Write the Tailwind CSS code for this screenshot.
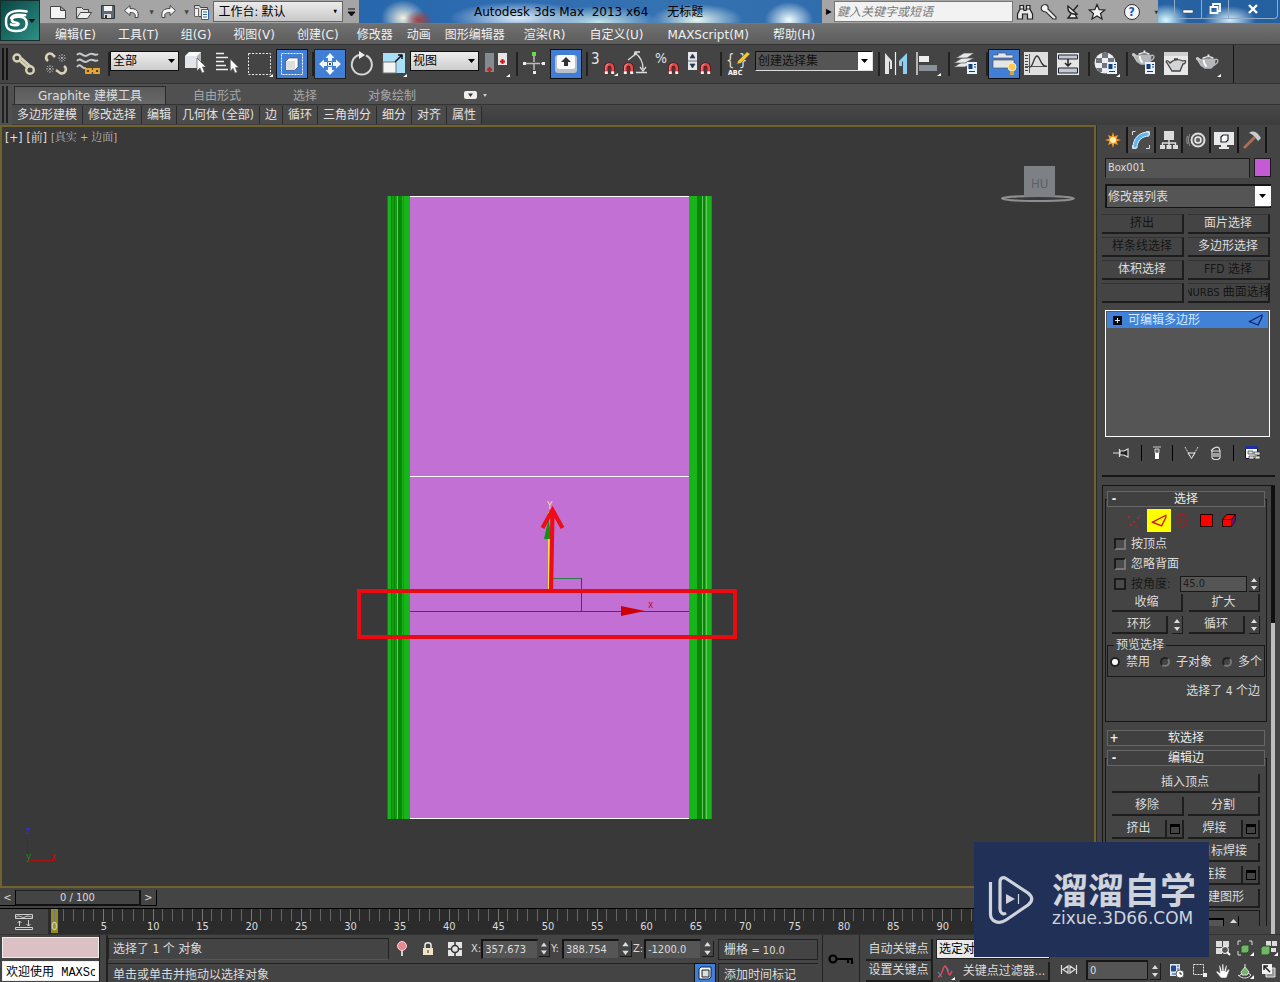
<!DOCTYPE html>
<html lang="zh-CN">
<head>
<meta charset="utf-8">
<title>Autodesk 3ds Max 2013 x64 - 无标题</title>
<script src="https://cdn.jsdelivr.net/npm/@tailwindcss/browser@4"></script>
</head>
<body class="bg-[#444] text-[#dcdcdc] text-[12px] leading-4 font-['DejaVu_Sans_Condensed','Noto_Sans','Noto_Sans_CJK_SC',sans-serif]">
<svg class="hidden" aria-hidden="true">
  <defs>
    <symbol id="magnet" viewBox="0 0 12 13"><path d="M2.500 13V6a3.500 3.500 0 0 1 7 0v7" fill="none" stroke="#5c0d10" stroke-width="4.600"/><path d="M2.500 10V6a3.500 3.500 0 0 1 7 0v4" fill="none" stroke="#e2474b" stroke-width="3"/><path d="M1.800 9V6a4 4 0 0 1 3-4" fill="none" stroke="#f59a9a"/><path d="M.8 10h3.400v3H.8zM7.800 10h3.400v3H7.800z" fill="#f2f2f2"/></symbol>
    <symbol id="cursor" viewBox="0 0 10 16"><path d="M1 0v13l3-3 2 5 2.500-1-2-5H10z" fill="#fff" stroke="#555" stroke-width=".7"/></symbol>
    <symbol id="panel" viewBox="0 0 10 12"><path d="M0 0h10v12H0z" fill="#e8f0fa"/><path d="M1.500 2h4v5h-4z" fill="#123f80"/><path d="M7 2.500h2M7 5h2M2 9.500h6" stroke="#123f80"/></symbol>
    <symbol id="teapot" viewBox="0 0 24 16"><path d="M6 8C3 3 0 3 1 5c3 1 2 6 7 8" fill="none" stroke="#c6c8ca" stroke-width="1.800"/><path d="M19 6c3-2 5 0 3 3l-4 3" fill="none" stroke="#b5b8bb" stroke-width="1.500"/><path d="M5 5c4-2 12-2 15 0 1 5-2 8-4 10H9C6 13 4 9 5 5z" fill="#b4b8bb"/><path d="M7 4c4-2 8-2 11 0M12 1h2" stroke="#f0f0f0" stroke-width="1.500"/><path d="M8 6c0 3 1 5 3 7" stroke="#f7f7f7" stroke-width="2" fill="none"/></symbol>
    <symbol id="spin" viewBox="0 0 10 14"><path d="M5 1l3 4H2zM5 13L2 9h6z" fill="#ddd"/></symbol>
    <symbol id="edge" viewBox="0 0 16 12"><path d="M1.500 7.500L14 1v2l-4 8z M1 7.500l9 3.500" fill="none" stroke="currentColor" stroke-width="1.200"/></symbol>
  </defs>
</svg>
<div class="min-h-screen flex flex-col relative">

  <!-- Application button, title bar and menus -->
  <header class="flex h-11 bg-linear-to-b from-[#8a8a8a] to-[#5c5c5c]">
    <button aria-label="应用程序菜单" class="w-10 h-[41px] border border-[#132d2c] bg-linear-to-br from-[#0c4544] to-[#2c9186] flex items-center shrink-0">
      <svg class="w-full h-10" viewBox="0 0 40 40"><path d="M27 10C16 8 7 10 5.500 17c-1 9 1 13 9 13.500 8 .5 12-1 12.500-7 .3-6-3-8-9-8-4 0-7 1-6.500 4 .5 3 7 1.500 7 3.500s-5 2-8 .5M10.500 17c2-4 9-4 15-3" fill="none" stroke="#fff" stroke-width="2.600" stroke-linecap="round"/><path d="M29 18h7l-3.500 4z" fill="#111"/></svg>
    </button>
    <div class="flex-1 min-w-0">
      <div class="h-6 flex bg-linear-to-r from-[#155ba8] via-[#3572b2] to-[#245f9f] border-b border-[#6c7884]">
        <div class="w-[319px] shrink-0 bg-[#a5a5a5] flex items-center pl-2">
          <button aria-label="新建" class="w-[26px]"><svg width="20" height="18" viewBox="0 0 20 18"><path d="M2.500 3.500h10l5 4v8h-15zM12.500 3.500v4h5" fill="#f4f4f4" stroke="#444"/></svg></button>
          <button aria-label="打开" class="w-[25px]"><svg width="20" height="18" viewBox="0 0 20 18"><path d="M2.500 15.500v-11h5l2 2h5v3" fill="#ddd" stroke="#444"/><path d="M2.500 15.500l4-6h11l-4 6z" fill="#eee" stroke="#444"/></svg></button>
          <button aria-label="保存" class="w-6"><svg width="18" height="18" viewBox="0 0 18 18"><path d="M2.500 2.500h13v13h-13z" fill="#5e6a78" stroke="#333"/><path d="M5 3h8v5H5z" fill="#f3f3f3"/><path d="M5 11h7v4H5z" fill="#ddd"/><path d="M6 12h2v3H6z" fill="#333"/></svg></button>
          <button aria-label="撤消" class="w-[22px]"><svg width="18" height="18" viewBox="0 0 18 18"><path d="M1.500 7.500L7 2.500v3c6 0 9 2 8 9h-3c1-4-1-5-5-5v3z" fill="#f5f5f5" stroke="#444"/></svg></button>
          <span class="w-[14px] text-[6px] text-[#444] text-center">▼</span>
          <button aria-label="重做" class="w-[22px]"><svg width="18" height="18" viewBox="0 0 18 18"><path d="M16.500 7.500L11 2.500v3c-6 0-9 2-8 9h3c-1-4 1-5 5-5v3z" fill="#f5f5f5" stroke="#444"/></svg></button>
          <span class="w-[12px] text-[6px] text-[#444] text-center">▼</span>
          <button aria-label="项目文件夹" class="w-[21px]"><svg width="18" height="18" viewBox="0 0 18 18"><path d="M1.500 5.500v-3h5l1 2h7v9h-9" fill="#ddd" stroke="#444"/><path d="M1.500 5.500h4v8h-4z" fill="#f2f2f2" stroke="#666"/><path d="M8.500 6.500h7v10h-7z" fill="#fff" stroke="#2b5ea5"/><path d="M10 9h4M10 11.500h4M10 14h4" stroke="#2b5ea5"/></svg></button>
          <div class="relative h-[21px] w-[130px]">
            <select aria-label="工作台" class="appearance-none w-full h-full bg-linear-to-b from-[#ececec] to-[#c8c8c8] border border-[#666] text-black text-[12px] leading-4 pl-1"><option>工作台: 默认</option></select>
            <span class="absolute right-1.5 top-0.5 text-[5px] text-black pointer-events-none">▼</span>
          </div>
          <button aria-label="自定义快速访问工具栏" class="w-4"><svg width="16" height="16" viewBox="0 0 16 16"><path d="M5 5h7M5 8h7l-3.500 4z" fill="#111" stroke="#111"/></svg></button>
        </div>
        <div class="flex-1 min-w-0 overflow-hidden bg-[radial-gradient(ellipse_14px_10px_at_60px_20px,#a33f3f,transparent),radial-gradient(ellipse_22px_18px_at_44px_18px,#f3f1df,transparent),radial-gradient(ellipse_70px_16px_at_160px_18px,#ddebf7,transparent),radial-gradient(ellipse_60px_16px_at_240px_22px,#c6e5ea,transparent),radial-gradient(ellipse_46px_16px_at_338px_20px,#e6f6ed,transparent),radial-gradient(ellipse_24px_18px_at_430px_20px,#f3ffff,transparent)] font-['DejaVu_Sans','Noto_Sans_CJK_SC',sans-serif] text-black flex items-center pl-[115px] gap-[19px]">
          <h1>Autodesk 3ds Max&nbsp; 2013 x64</h1><span>无标题</span>
        </div>
        <div class="w-[336px] shrink-0 bg-[#a5a5a5] flex items-center">
          <span class="w-3 pl-1 text-[8px] text-black">▶</span>
          <input aria-label="搜索" placeholder="鍵入关键字或短语" class="w-[180px] h-[21px] bg-[#f2f2f2] border border-[#777] px-0.5 italic text-[12px] leading-5 placeholder:text-[#777]">
          <button aria-label="搜索帮助" class="w-6 flex justify-center"><svg width="18" height="18" viewBox="0 0 18 18"><path d="M4 2.500h3.500V6L8 7.500h2l.5-1.500V2.500H14V6l2.500 5v5h-5v-5h-5v5h-5v-5L4 6z" fill="#e9e9e9" stroke="#222" stroke-width="1.200"/><path d="M4 6h3.500m3 0H14" stroke="#222"/></svg></button>
          <button aria-label="速博" class="w-6 flex justify-center"><svg width="18" height="18" viewBox="0 0 18 18"><path d="M2 3c3-3 7-1 6 3l8 8v2h-3l-7-7C2 9 0 6 2 3z" fill="#f3f3f3" stroke="#333" stroke-width="1.200"/></svg></button>
          <button aria-label="通讯中心" class="w-6 flex justify-center"><svg width="18" height="18" viewBox="0 0 18 18"><path d="M4 3c-1 6 4 9 9 8zM9 8l5-6M7 11l-3 4h9l-2-4" fill="#eee" stroke="#222" stroke-width="1.400"/></svg></button>
          <button aria-label="收藏夹" class="w-6 flex justify-center"><svg width="18" height="18" viewBox="0 0 18 18"><path d="M9 1.500l2.200 5.200 5.600.3-4.300 3.500 1.500 5.500L9 13l-5 3 1.500-5.500L1.200 7l5.600-.3z" fill="#f4f4f4" stroke="#222" stroke-width="1.200"/></svg></button>
          <button aria-label="帮助" class="w-[46px] flex justify-center"><span class="w-4 h-4 rounded-full border border-[#333] bg-[#f5f5f5] text-[#1c52b0] font-bold text-[12px] leading-[14px]">?</span></button>
          <span class="text-[5px] text-[#333]">▼</span>
        </div>
        <div class="w-[122px] shrink-0 pl-4 pr-0.5 bg-[radial-gradient(ellipse_22px_16px_at_8px_20px,#d8faff,transparent),radial-gradient(ellipse_26px_14px_at_72px_20px,#d4ecf5,transparent)]">
          <div class="h-[19px] border border-t-0 border-[#8eabca] rounded-b flex">
            <button aria-label="最小化" class="flex-1 border-r border-[#8eabca] flex items-center justify-center"><svg width="12" height="12" viewBox="0 0 12 12"><path d="M1 7h10v3H1z" fill="#fff" stroke="#345" stroke-width=".5"/></svg></button>
            <button aria-label="还原" class="flex-1 border-r border-[#8eabca] flex items-center justify-center"><svg width="12" height="12" viewBox="0 0 12 12"><path d="M4 3V1h7v7H9M1.500 4h7v6h-7z" fill="none" stroke="#fff" stroke-width="1.800"/></svg></button>
            <button aria-label="关闭" class="w-12 flex items-center justify-center"><svg width="12" height="12" viewBox="0 0 12 12"><path d="M2 2l8 8M10 2l-8 8" stroke="#fff" stroke-width="2.400"/></svg></button>
          </div>
        </div>
      </div>
      <nav class="h-5 flex items-center pt-0.5 pl-1 text-[#f0f0f0] whitespace-nowrap font-['DejaVu_Sans','Noto_Sans_CJK_SC',sans-serif]">
        <button class="px-[11px]">编辑(E)</button><button class="px-[11px]">工具(T)</button><button class="px-[11px]">组(G)</button><button class="px-[11px]">视图(V)</button><button class="px-[11px]">创建(C)</button><button class="px-[7px]">修改器</button><button class="px-[7px]">动画</button><button class="px-[7px]">图形编辑器</button><button class="px-3">渲染(R)</button><button class="px-3">自定义(U)</button><button class="px-3">MAXScript(M)</button><button class="px-3">帮助(H)</button>
      </nav>
    </div>
  </header>

  <!-- Main toolbar -->
  <div role="toolbar" aria-label="主工具栏" class="h-10 flex items-center border-y border-[#333] bg-[#444]">
    <div class="w-2 h-8 flex gap-0.5 pl-0.5"><i class="w-0.5 bg-black/70"></i><i class="w-0.5 bg-black/70"></i></div>
    <div class="flex items-center h-full border-r border-[#161616] w-[1226px]">
      <button aria-label="选择并链接" class="w-8 flex justify-center"><svg width="28" height="28" viewBox="0 0 28 28"><g fill="none" stroke="#d8d3b7" stroke-width="2.400"><circle cx="7" cy="8" r="3.500"/><circle cx="20" cy="20" r="3.800"/><path d="M9 10l9 8M11 8l9 8"/></g></svg></button>
      <button aria-label="断开当前选择链接" class="w-8 flex justify-center"><svg width="28" height="28" viewBox="0 0 28 28"><path d="M6 11c-4-3-1-9 4-7l3 3M22 16c4 3 1 9-4 7l-4-3" fill="none" stroke="#d8d3b7" stroke-width="2.500"/><path d="M17 5l6 6m0-6l-6 6m3-7v8m-4-4h8M5 16l6 6m0-6l-6 6m3-7v8m-4-4h8" stroke="#aaa" stroke-dasharray="2 1"/></svg></button>
      <button aria-label="绑定到空间扭曲" class="w-8 flex justify-center"><svg width="28" height="28" viewBox="0 0 28 28"><path d="M3 5c4-5 6 4 11 0s6 2 10-1M3 11c4-5 6 4 11 0s6 2 10-1M3 17c4-5 5 3 9 1" fill="none" stroke="#c5c9cc" stroke-width="2"/><path d="M12 19h5v4h-5zm8 0h5v4h-5zM15 21h7" fill="none" stroke="#eba529" stroke-width="1.800"/></svg></button>
      <i class="w-1.5 h-6 border-r-2 border-[#222]"></i>
      <div class="relative w-[70px] h-5 self-start mt-1.5"><select aria-label="选择过滤器" class="appearance-none w-[69px] h-5 border border-[#111] bg-linear-to-b from-[#eee] to-[#ccc] text-black text-[12px] leading-4 pl-0.5"><option>全部</option></select><svg class="absolute right-1 top-2 pointer-events-none" width="8" height="5"><path d="M0 0h7L3.500 4z"/></svg></div>
      <button aria-label="选择对象" class="w-8 flex justify-center"><svg width="28" height="28" viewBox="0 0 28 28"><path d="M3 6l4-4h12v12l-4 4H3z" fill="#fafafa"/><path d="M3 6h12v12H3z" fill="#e2e5e9"/><path d="M15 6l4-4v12l-4 4z" fill="#b3b7bd"/><use href="#cursor" x="14" y="8" width="10" height="16"/></svg></button>
      <button aria-label="按名称选择" class="w-8 flex justify-center"><svg width="28" height="28" viewBox="0 0 28 28"><path d="M2 3.500h8M2 7.500h12M2 11.500h8M2 15.500h10M2 19.500h12" stroke="#eee" stroke-width="1.600"/><use href="#cursor" x="15" y="9" width="10" height="15"/></svg></button>
      <button aria-label="矩形选择区域" class="w-8 flex justify-center"><svg width="28" height="28" viewBox="0 0 28 28"><path d="M2.500 3.500h22v21h-22z" fill="none" stroke="#eee" stroke-dasharray="2 1.500"/><path d="M27 24v3h-4z" fill="#fff"/></svg></button>
      <button aria-label="窗口/交叉" class="w-8 h-[30px] bg-[#417fd6] border border-[#111] flex justify-center items-center"><svg width="28" height="28" viewBox="0 0 28 28"><path d="M3.500 3.500h21v21h-21z" fill="none" stroke="#fff" stroke-dasharray="2 1"/><path d="M8 11l3-3h9v9l-3 3H8z" fill="#fff" stroke="#555" stroke-width=".7"/><path d="M8 11h9v9H8z" fill="#dedede"/></svg></button>
      <i class="w-1.5 h-6 border-r-2 border-[#222]"></i>
      <button aria-label="选择并移动" class="w-8 h-[30px] bg-[#417fd6] border border-[#222] flex justify-center items-center"><svg width="28" height="28" viewBox="0 0 28 28"><path d="M14 3l4.500 5H16v3h-4V8H9.500zM14 25l4.500-5H16v-3h-4v3H9.500zM3 14l5-4.500V12h3v4H8v2.500zM25 14l-5-4.500V12h-3v4h3v2.500z" fill="#f0f4fb"/><path d="M12.500 12.500h3v3h-3z" fill="#1d427d" stroke="#fff"/></svg></button>
      <button aria-label="选择并旋转" class="w-8 flex justify-center"><svg width="28" height="28" viewBox="0 0 28 28"><path d="M11 5a10 10 0 1 0 7 .5" fill="none" stroke="#d5d5d5" stroke-width="2"/><path d="M11 1l6 4-6 4z" fill="#eee"/></svg></button>
      <button aria-label="选择并缩放" class="w-8 flex justify-center"><svg width="28" height="28" viewBox="0 0 28 28"><path d="M3 3h22v20H3z" fill="#a9def8"/><path d="M3 12h13v11H3z" fill="#f4f4f4" stroke="#777"/><path d="M15 12l7-7M18 5h4v4" stroke="#111" stroke-width="1.500" fill="none"/><path d="M27 24v3h-4z" fill="#fff"/></svg></button>
      <div class="relative w-[70px] h-5 self-start mt-1.5"><select aria-label="参考坐标系" class="appearance-none w-[69px] h-5 border border-[#111] bg-linear-to-b from-[#eee] to-[#ccc] text-black text-[12px] leading-4 pl-0.5"><option>视图</option></select><svg class="absolute right-1 top-2 pointer-events-none" width="8" height="5"><path d="M0 0h7L3.500 4z"/></svg></div>
      <button aria-label="使用轴点中心" class="w-8 flex justify-center"><svg width="28" height="28" viewBox="0 0 28 28"><path d="M3 3h9v19H3z" fill="#858a91"/><path d="M16 3h9v12h-9z" fill="#e6e6e6"/><path d="M7.500 17v5m-2.500-2.500h5M20.500 9v5M18 11.500h5" stroke="#d21717" stroke-width="2"/><path d="M28 24v3h-4z" fill="#fff"/></svg></button>
      <i class="w-1.5 h-6 border-r-2 border-[#222]"></i>
      <button aria-label="选择并操纵" class="w-8 flex justify-center"><svg width="28" height="28" viewBox="0 0 28 28"><path d="M14 5v18M5 13.500h18M11 13.500h6" stroke="#bbb" stroke-width="1.500" stroke-dasharray="7 1"/><path d="M12 2h4v4h-4z" fill="#6bdc3d"/><path d="M3 12h3v3H3zm19 0h3v3h-3zm-9 9h3v3h-3z" fill="#eee"/></svg></button>
      <button aria-label="键盘快捷键覆盖切换" class="w-8 h-[30px] bg-[#417fd6] border border-[#111] flex justify-center items-center"><svg width="28" height="28" viewBox="0 0 28 28"><rect x="3" y="5" width="22" height="18" rx="3" fill="#b9bfc6"/><rect x="5" y="5" width="18" height="14" rx="2" fill="#fafafa"/><path d="M14 7l5 5h-3v4h-4v-4H9z" fill="#333"/></svg></button>
      <i class="w-1.5 h-6 border-r-2 border-[#222]"></i>
      <button aria-label="捕捉开关" class="w-8 flex justify-center"><svg width="28" height="28" viewBox="0 0 28 28"><text x="1" y="14" font-size="15" fill="#e6e6e6">3</text><use href="#magnet" x="14" y="12" width="11" height="12"/><path d="M28 23v3h-4z" fill="#fff"/></svg></button>
      <button aria-label="角度捕捉" class="w-8 flex justify-center"><svg width="28" height="28" viewBox="0 0 28 28"><use href="#magnet" x="1" y="12" width="11" height="12"/><path d="M6 10l9-7M14 22.500h11M13 3c6 4 8 9 8 16M18 17l3 4 3-4M12 6l1-4 5 0" fill="none" stroke="#ddd" stroke-width="1.300"/></svg></button>
      <button aria-label="百分比捕捉" class="w-8 flex justify-center"><svg width="28" height="28" viewBox="0 0 28 28"><text x="1" y="13" font-size="14" fill="#e6e6e6">%</text><use href="#magnet" x="14" y="12" width="11" height="12"/></svg></button>
      <button aria-label="微调器捕捉" class="w-8 flex justify-center"><svg width="28" height="28" viewBox="0 0 28 28"><path d="M2 2h9v18H2z" fill="#e5e7ea"/><path d="M4 8l2.500-4L9 8zM4 14h5l-2.500 4zM2 11h9" fill="#234" stroke="#345" stroke-width=".7"/><use href="#magnet" x="14" y="12" width="11" height="12"/></svg></button>
      <i class="w-1.5 h-6 border-r-2 border-[#222]"></i>
      <button aria-label="编辑命名选择集" class="w-8 flex justify-center"><svg width="28" height="28" viewBox="0 0 28 28"><text x="2" y="15" font-size="15" fill="#ddd">{&#160;}</text><path d="M23 2l3 2-9 9-4 1 1-3z" fill="#f4c43b" stroke="#8c6a1c" stroke-width=".6"/><text x="4" y="25" font-size="7" font-weight="bold" fill="#fff">ABC</text></svg></button>
      <div class="relative w-[120px] h-5 self-start mt-1.5 pl-px"><select aria-label="命名选择集" class="appearance-none w-[118px] h-5 border border-[#ddd] border-t-[#111] border-l-[#111] bg-[#555] text-[#111] text-[12px] leading-4 pl-0.5"><option>创建选择集</option></select><span class="absolute right-[2px] top-px w-3.5 h-[18px] bg-white pointer-events-none flex justify-center items-center"><svg width="8" height="5"><path d="M0 0h7L3.500 4z"/></svg></span></div>
      <i class="w-1.5 h-6 border-r-2 border-[#222]"></i>
      <button aria-label="镜像" class="w-8 flex justify-center"><svg width="28" height="28" viewBox="0 0 28 28"><path d="M3 3l7 8v8H8v-7l-1-1v13H3z" fill="#e5e5e5"/><path d="M13.500 2v23" stroke="#eee" stroke-width="1.200"/><path d="M25 3l-8 8v5h3v-4l1-1v13h4z" fill="#8bd0f0"/></svg></button>
      <button aria-label="对齐" class="w-8 flex justify-center"><svg width="28" height="28" viewBox="0 0 28 28"><path d="M3 2v23" stroke="#ddd" stroke-width="1.500"/><path d="M5 6h10v6H5z" fill="#eee"/><path d="M5 15h18v6H5z" fill="#8b919a"/><path d="M27 23v3h-4z" fill="#fff"/></svg></button>
      <i class="w-1.5 h-6 border-r-2 border-[#222]"></i>
      <button aria-label="层管理器" class="w-8 flex justify-center"><svg width="28" height="28" viewBox="0 0 28 28"><g fill="#e8e8e8" stroke="#555" stroke-width=".7"><path d="M2 17l8-5h12l-9 5z"/><path d="M2 13l8-5h12l-9 5z"/><path d="M4 8l8-5h10l-7 5z"/></g><use href="#panel" x="15" y="12" width="10" height="12"/></svg></button>
      <i class="w-1.5 h-6 border-r-2 border-[#222]"></i>
      <button aria-label="石墨建模工具" class="w-8 h-[30px] bg-[#417fd6] border border-[#111] flex justify-center items-center"><svg width="28" height="28" viewBox="0 0 28 28"><path d="M3 8V5h5V3h8v2h7v3zM3 10h21v8H3z" fill="#e5e6e8" stroke="#555" stroke-width=".7"/><circle cx="22" cy="17" r="4" fill="#ffc95a" stroke="#fff0b0"/><path d="M20 21h4v4h-4z" fill="#d0a84f"/></svg></button>
      <button aria-label="曲线编辑器" class="w-8 flex justify-center"><svg width="28" height="28" viewBox="0 0 28 28"><path d="M2 2h24v23H2z" fill="#dfdfdf"/><path d="M7.500 4v19M3 16.500h22" stroke="#555"/><path d="M4.500 5v18" stroke="#444" stroke-width="3" stroke-dasharray="1 2"/><path d="M8 17c3 0 4-11 7-11s4 12 10 10" fill="none" stroke="#333" stroke-width="1.300"/></svg></button>
      <button aria-label="图解视图" class="w-8 flex justify-center"><svg width="28" height="28" viewBox="0 0 28 28"><path d="M3 3h22v22H3z" fill="#e5e5e5"/><path d="M4.500 5h19v4h-19zm0 13h19v5h-19z" fill="#c3cad0" stroke="#223"/><path d="M14 9v7m-3-3l3 3 3-3" fill="none" stroke="#222" stroke-width="1.500"/></svg></button>
      <i class="w-1.5 h-6 border-r-2 border-[#222]"></i>
      <button aria-label="材质编辑器" class="w-8 flex justify-center"><svg width="28" height="28" viewBox="0 0 28 28"><circle cx="13" cy="13" r="10.500" fill="#eee"/><path d="M10 3h6v5h-6zM4 8h6v5H4zm12 0h6v5h-6zm-6 5h6v5h-6zm-6 5h6v4H7z" fill="#70767e"/><use href="#panel" x="15" y="12" width="10" height="12"/><path d="M28 24v3h-4z" fill="#fff"/></svg></button>
      <i class="w-1.5 h-6 border-r-2 border-[#222]"></i>
      <button aria-label="渲染设置" class="w-8 flex justify-center"><svg width="28" height="28" viewBox="0 0 28 28"><use href="#teapot" x="2" y="0" width="23" height="16"/><use href="#panel" x="15" y="12" width="10" height="12"/></svg></button>
      <button aria-label="渲染帧窗口" class="w-8 flex justify-center"><svg width="28" height="28" viewBox="0 0 28 28"><path d="M2 2h24v23H2z" fill="#e8e8e8"/><path d="M2 2h24v4H2z" fill="#cfcfcf"/><path d="M8 13C5 9 3 11 5 13l5 8h8l3-7c3 0 4-5 0-3-4-2-9-2-13 2zM12 9h4" fill="#d2d5d8" stroke="#444" stroke-width="1.300"/></svg></button>
      <button aria-label="渲染产品" class="w-8 flex justify-center"><svg width="28" height="28" viewBox="0 0 28 28"><use href="#teapot" x="2" y="4" width="23" height="16"/><path d="M27 24v3h-4z" fill="#fff"/></svg></button>
    </div>
  </div>

  <!-- Graphite ribbon -->
  <div class="flex h-[41px] bg-[#505050]">
    <div class="w-3 py-0.5 flex gap-0.5 pl-0.5 shrink-0"><i class="w-0.5 bg-black/60"></i><i class="w-0.5 bg-black/60"></i></div>
    <div class="flex-1">
      <div class="h-[21px] flex items-end text-[#a8a8a8] border-b border-[#333] pl-0.5">
        <button class="w-[152px] h-[18px] bg-linear-to-b from-[#5a5a5a] to-[#686868] border border-b-0 border-[#2b2b2b] text-[#ddd] font-['DejaVu_Sans','Noto_Sans_CJK_SC',sans-serif]">Graphite 建模工具</button>
        <button class="ml-[27px]">自由形式</button><button class="ml-[52px]">选择</button><button class="ml-[51px]">对象绘制</button>
        <button aria-label="最小化功能区" class="ml-12 mb-1"><svg width="24" height="10" viewBox="0 0 24 10"><rect width="13" height="8" y="1" rx="2" fill="#eee"/><path d="M4 3.500h5L6.500 7z" fill="#333"/><path d="M19 4h4l-2 3z" fill="#ccc"/></svg></button>
      </div>
      <div class="h-5 flex items-center bg-linear-to-b from-[#484848] to-[#3c3c3c] text-[#e2e2e2] whitespace-nowrap">
        <button class="px-[5px] h-[18px] border-r border-[#2a2a2a] bg-[#4b4b4b]">多边形建模</button><button class="px-[5px] h-[18px] border-r border-[#2a2a2a] bg-[#4b4b4b]">修改选择</button><button class="px-[5px] h-[18px] border-r border-[#2a2a2a] bg-[#4b4b4b]">编辑</button><button class="px-[5px] h-[18px] border-r border-[#2a2a2a] bg-[#4b4b4b]">几何体 (全部)</button><button class="px-[5px] h-[18px] border-r border-[#2a2a2a] bg-[#4b4b4b]">边</button><button class="px-[5px] h-[18px] border-r border-[#2a2a2a] bg-[#4b4b4b]">循环</button><button class="px-[5px] h-[18px] border-r border-[#2a2a2a] bg-[#4b4b4b]">三角剖分</button><button class="px-[5px] h-[18px] border-r border-[#2a2a2a] bg-[#4b4b4b]">细分</button><button class="px-[5px] h-[18px] border-r border-[#2a2a2a] bg-[#4b4b4b]">对齐</button><button class="px-[5px] h-[18px] border-r border-[#2a2a2a] bg-[#4b4b4b]">属性</button>
      </div>
    </div>
  </div>

  <div class="flex-1 flex">
    <!-- Viewport, time slider and track bar -->
    <main class="flex-1 min-w-0 flex flex-col">
      <div class="flex-1 relative border-2 border-[#6f622c] bg-[#393939]">
        <div class="absolute left-[3px] top-[3px] flex gap-1 font-['DejaVu_Sans_Condensed','Noto_Serif_CJK_SC','Noto_Sans_CJK_SC',sans-serif] text-[#e2e2e2] text-[12px]"><button>[+]</button><button>[前]</button><button class="text-[#b8b8b8] text-[11px]">[真实 + 边面]</button></div>
        <svg class="absolute inset-0 w-full h-full" viewBox="2 127 1092 759" shape-rendering="crispEdges">
          <path d="M387 196h23v623h-23zM689 196h23v623h-23z" fill="#17b519"/>
          <path d="M387 196h1v623h-1zM391 196h1v623h-1zM394 196h1v623h-1zM398 196h4v623h-4zM697 196h5v623h-5zM703 196h2v623h-2z" fill="#098509"/>
          <path d="M392 196h2v623h-2zM395 196h2v623h-2zM403 196h1v623h-1zM711 196h1v623h-1z" fill="#119c11"/>
          <path d="M397 196h1v623h-1zM702 196h1v623h-1zM706 196h1v623h-1z" fill="#63cb5c"/>
          <path d="M410 196h279v623H410z" fill="#c370d5"/>
          <path d="M410 196h279v1H410zM410 476h279v1H410zM410 818h279v1H410z" fill="#fff"/>
          <path d="M410 611h279v1H410zM581 578h1v33h-1z" fill="#b80a28"/>
          <path d="M552 578h29v1h-29z" fill="#2c7f4c"/>
          <path d="M548 512h2v78h-2z" fill="#f4e04a"/>
          <g shape-rendering="auto">
            <path d="M544 539l5-22 2 22z" fill="#109210"/>
            <path d="M551 590l1.500-78M542.500 528l10-18 10 18" fill="none" stroke="#ee0c16" stroke-width="4.200"/>
            <path d="M621 606l24 5-24 5z" fill="#cc0008"/>
            <text x="547" y="509" font-size="10" fill="#f3dc9a">Y</text>
            <text x="648" y="608" font-size="10" fill="#c0102a">x</text>
            <path d="M27.500 838v22" stroke="#2424b0"/><path d="M28 860.500h27" stroke="#a11"/>
            <text x="26" y="834" font-size="10" fill="#3030d8">z</text><text x="26" y="860" font-size="10" fill="#1a8a1a">y</text><text x="51" y="860" font-size="10" fill="#b11">x</text>
            <ellipse cx="1038" cy="198.500" rx="36" ry="2.500" fill="none" stroke="#8d8f91" stroke-width="2"/>
            <path d="M1024 166h31v31h-31z" fill="#7d8084"/>
            <text x="1031" y="188" font-size="13" fill="#5d6064">HU</text>
          </g>
          <path d="M359 591h376v46H359z" fill="none" stroke="#ea0b12" stroke-width="4"/>
        </svg>
      </div>
      <div class="h-5 flex items-center text-[11px]">
        <button class="w-4 h-4 border-r border-b border-black leading-3">&lt;</button>
        <button class="w-[125px] h-4 border-r-2 border-b-2 border-[#111] border-t border-t-[#222] leading-3">0 / 100</button>
        <button class="w-4 h-4 border-r border-b border-black leading-3">&gt;</button>
      </div>
      <div class="h-[26px] flex bg-[#2b2b2b] border-t border-black text-[11px]">
        <button aria-label="打开迷你曲线编辑器" class="w-[48px] bg-[#444] flex items-center justify-center"><svg width="18" height="18" viewBox="0 0 18 18"><path d="M.5 1.500h17v4H.5zM.5 14.500h17v2H.5zM1 4c4-3 6 2 9 0s5 0 7 0M4.500 13V8m-2 2l2-2 2 2M13.500 7v6m-2-2l2 2 2-2" fill="none" stroke="#d0d0d0"/></svg></button>
        <div class="w-1.5 flex justify-center relative"><i class="absolute left-[3px] top-0 w-[7px] h-6 bg-[#938d1f]"></i></div>
        <div id="ruler" class="flex-1 flex relative mr-[55px]"></div>
      </div>
    </main>

    <!-- Command panel -->
    <aside class="w-[184px] shrink-0 pl-[5px] pr-[5px] pt-0.5 flex flex-col border-l border-[#2c2c2c]">
      <div class="h-[26px] flex -ml-0.5 mr-2">
        <button aria-label="创建" class="flex-1 border-r-2 border-[#161616] flex justify-center items-center"><svg width="20" height="20" viewBox="0 0 20 20"><path d="M10 2l1.300 4.500L15 5l-1.500 3.700L18 10l-4.500 1.300L15 15l-3.700-1.500L10 18l-1.300-4.500L5 15l1.500-3.700L2 10l4.500-1.300L5 5l3.700 1.500z" fill="#ff9d1e"/><circle cx="10" cy="10" r="3" fill="#fff2b0"/></svg></button>
        <button aria-label="修改" class="flex-1 border-r-2 border-[#161616] bg-[#4c4c4c] flex justify-center items-center"><svg width="20" height="20" viewBox="0 0 20 20"><path d="M2 18C2 8 8 2 18 2v4C11 6 6 11 6 18z" fill="#5fb6ef" stroke="#e6f5ff"/><path d="M1.500 5V1.500h3M15 1.500h3.500V5M1.500 15v3.500H5M18.500 15v3.500H15" fill="none" stroke="#ddd"/></svg></button>
        <button aria-label="层次" class="flex-1 border-r-2 border-[#161616] flex justify-center items-center"><svg width="20" height="20" viewBox="0 0 20 20"><path d="M5 1h10v9H5zM1 15h5v4H1zm6.500 0h5v4h-5zM14 15h5v4h-5z" fill="#ddd"/><path d="M10 9v6M3.500 15v-2h13v2" fill="none" stroke="#ddd" stroke-width="1.400"/></svg></button>
        <button aria-label="运动" class="flex-1 border-r-2 border-[#161616] flex justify-center items-center"><svg width="20" height="20" viewBox="0 0 20 20"><circle cx="12" cy="10" r="6.500" fill="#555" stroke="#ddd" stroke-width="2"/><circle cx="12" cy="10" r="3" fill="#666" stroke="#eee" stroke-width="1.500"/><path d="M4 4c-2 4-2 8 0 12M1.500 6c-1 3-1 5 0 8" fill="none" stroke="#999"/></svg></button>
        <button aria-label="显示" class="flex-1 border-r-2 border-[#161616] flex justify-center items-center"><svg width="20" height="20" viewBox="0 0 20 20"><path d="M0 2h20v13H0zM7 15h6v2h2v2H5v-2h2z" fill="#e7e9eb"/><path d="M7 7l2-2h5v5l-2 2H7z" fill="#fff" stroke="#222" stroke-width="1.200"/></svg></button>
        <button aria-label="实用程序" class="flex-1 border-r-2 border-[#161616] flex justify-center items-center"><svg width="20" height="20" viewBox="0 0 20 20"><path d="M12 6L1 17l2 2L14 8z" fill="#a96f50"/><path d="M7 3c4-3 7-1 9 1l3 4-3 3-3-4c-2-2-3-3-6-4z" fill="#c9cccf"/></svg></button>
      </div>
      <div class="mt-[5px] flex gap-1 h-5 pl-[3px] mr-1">
        <input aria-label="对象名称" value="Box001" class="flex-1 min-w-0 bg-[#555] border border-[#1b1b1b] border-b-[#555] px-0.5 text-[11px]">
        <button aria-label="对象颜色" class="w-[17px] h-[19px] bg-[#c45ad4] border border-[#1b1b1b]"></button>
      </div>
      <div class="mt-1.5 relative ml-[3px] mr-1 h-6">
        <select aria-label="修改器列表" class="appearance-none w-full h-6 bg-[#555] border border-t-2 border-l-2 border-[#161616] text-[12px] leading-5 pl-px"><option>修改器列表</option></select>
        <span class="absolute right-0 top-0.5 w-4 h-5 bg-white flex justify-center items-center pointer-events-none"><svg width="8" height="5"><path d="M0 0h7L3.500 4z"/></svg></span>
      </div>
      <div class="mt-1.5 mr-[5px] grid grid-cols-2 gap-x-1 gap-y-[3px] whitespace-nowrap">
        <button class="h-5 border-r-2 border-b-2 border-t border-[#1d1d1d] border-t-[#333] text-[#151515] leading-[17px]">挤出</button><button class="h-5 border-r-2 border-b-2 border-t border-[#1d1d1d] border-t-[#333] leading-[17px]">面片选择</button>
        <button class="h-5 border-r-2 border-b-2 border-t border-[#1d1d1d] border-t-[#333] text-[#151515] leading-[17px]">样条线选择</button><button class="h-5 border-r-2 border-b-2 border-t border-[#1d1d1d] border-t-[#333] leading-[17px]">多边形选择</button>
        <button class="h-5 border-r-2 border-b-2 border-t border-[#1d1d1d] border-t-[#333] leading-[17px]">体积选择</button><button class="h-5 border-r-2 border-b-2 border-t border-[#1d1d1d] border-t-[#333] text-[#151515] leading-[17px]">FFD 选择</button>
        <button aria-label="空" class="h-5 border-r-2 border-b-2 border-t border-[#1d1d1d] border-t-[#333]"></button><button class="h-5 border-r-2 border-b-2 border-t border-[#1d1d1d] border-t-[#333] text-[#151515] leading-[17px] overflow-hidden flex justify-center"><span class="text-[11px]">NURBS&nbsp;</span>曲面选择</button>
      </div>
      <div class="mt-[7px] ml-[3px] mr-[5px] h-[127px] border border-white bg-[#555] p-px">
        <div class="h-4 bg-[#3f82d8] flex items-center pl-1.5 pr-1 text-[#d7e8ff]"><svg width="9" height="9" viewBox="0 0 9 9"><path d="M0 0h9v9H0z" fill="#0a0a14"/><path d="M4.500 2v5M2 4.500h5" stroke="#eee"/></svg><span class="flex-1 pl-1.5">可编辑多边形</span><svg class="text-[#10206a]" width="16" height="12"><use href="#edge"/></svg></div>
      </div>
      <div class="mt-1.5 h-5 flex items-center pl-[11px] pr-3.5 justify-between">
        <button aria-label="锁定堆栈"><svg width="17" height="12" viewBox="0 0 17 12"><path d="M0 6h6" stroke="#ddd"/><path d="M6.500 2v8M7 4h4l4-2v8l-4-2H7z" fill="#222" stroke="#ddd" stroke-width="1.200"/></svg></button><i class="w-px h-4 bg-black"></i>
        <button aria-label="显示最终结果"><svg width="8" height="14" viewBox="0 0 8 14"><path d="M0 1h8M2 3h4v4H2z" stroke="#ccc" fill="#666"/><path d="M2 7h4v6H2z" fill="#fff"/></svg></button><i class="w-px h-4 bg-black"></i>
        <button aria-label="使唯一"><svg width="15" height="14" viewBox="0 0 15 14"><path d="M1 1l5 9M14 1L9 10" stroke="#ddd" stroke-dasharray="2 1"/><path d="M4 7h7l-3.500 5.500z" fill="none" stroke="#eee"/></svg></button>
        <button aria-label="移除修改器"><svg width="12" height="14" viewBox="0 0 12 14"><path d="M2 5h8v7l-2 1.500H4L2 12zM1 5c2-3 6-5 8-3l1 3M4 7v4M6 7v4M8 7v4" fill="none" stroke="#ddd" stroke-width="1.200"/></svg></button><i class="w-px h-4 bg-black"></i>
        <button aria-label="配置修改器集"><svg width="16" height="14" viewBox="0 0 16 14"><path d="M.5.500h12v12H.5z" fill="#fff" stroke="#113"/><path d="M0 0h13v3H0z" fill="#1b2fa8"/><path d="M3 5h5v3H3zm6 1h6v3H9zm-5 4h5v3H4zm6 0h5v3h-5z" fill="#ddd" stroke="#333" stroke-width=".7"/></svg></button>
      </div>
      <div class="mt-3 border-t-2 border-[#161616]"></div>

      <div class="mt-2 flex-1 flex border-l border-t border-[#161616]">
        <div class="flex-1 pl-0.5 pt-[5px] min-w-0 mr-1">
          <section>
            <h2 class="relative mx-0.5 h-4 bg-[#404040] border border-[#666] flex items-center"><button class="w-full flex text-[#eee]"><span class="w-3 font-bold">-</span><span class="flex-1 pr-3">选择</span></button></h2>
            <div class="-mt-2 border border-[#181818] pt-2 px-1.5">
              <div class="h-6 flex items-center justify-between pl-4 pr-6">
                <button aria-label="顶点"><svg width="14" height="16" viewBox="0 0 14 16"><path d="M1 4v2M6 9v2M3 12v2M10 5v2M12 3v1M8 14v1" stroke="#c52222" stroke-width="1.500"/></svg></button>
                <button aria-label="边" class="w-6 h-[23px] bg-[#ffff00] flex items-center justify-center text-[#d01010]"><svg width="17" height="13"><use href="#edge"/></svg></button>
                <button aria-label="边界"><svg width="12" height="16" viewBox="0 0 12 16"><path d="M1 2h5l4 4v5l-3 3H1v-3l3-3-3-3z" fill="none" stroke="#b31919" stroke-width="1.500" stroke-dasharray="3 1"/></svg></button>
                <button aria-label="多边形" class="ml-1.5"><svg width="13" height="13"><path d="M.5.500h12v12H.5z" fill="#f00" stroke="#200"/></svg></button>
                <button aria-label="元素" class="ml-1"><svg width="14" height="13" viewBox="0 0 14 13"><path d="M.5 5.500l4-5h9v6l-4 6h-9z" fill="#f00" stroke="#200"/><path d="M9.500 5.500l4-5v6l-4 6z" fill="#6b1065"/><path d="M.5 5.500h9v7m0-7l4-5" fill="none" stroke="#200"/></svg></button>
              </div>
              <div class="mt-0.5 pl-0.5">
                <label class="h-5 flex items-center gap-[5px]"><input type="checkbox" class="appearance-none w-3 h-3 border-2 border-[#1b1b1b] border-r-[#777] border-b-[#777] bg-[#4a4a4a]">按顶点</label>
                <label class="h-5 flex items-center gap-[5px]"><input type="checkbox" class="appearance-none w-3 h-3 border-2 border-[#1b1b1b] border-r-[#777] border-b-[#777] bg-[#4a4a4a]">忽略背面</label>
                <div class="h-5 flex items-center"><label class="flex items-center gap-[5px] text-[#181818]"><input type="checkbox" class="appearance-none w-3 h-3 border-2 border-[#1b1b1b] bg-[#4a4a4a]">按角度:</label><input aria-label="角度" value="45.0" class="ml-auto w-[67px] h-4 bg-[#555] border border-[#181818] text-[#1c1c1c] text-[11px] px-0.5"><button aria-label="调整角度" class="ml-0.5 border-r border-b border-[#1b1b1b]"><svg width="10" height="14"><use href="#spin"/></svg></button></div>
              </div>
              <div class="grid grid-cols-2 gap-x-1.5 gap-y-1">
                <button class="h-[18px] border-r-2 border-b-2 border-[#1d1d1d] leading-4">收缩</button><button class="h-[18px] border-r-2 border-b-2 border-[#1d1d1d] leading-4">扩大</button>
                <div class="flex gap-1"><button class="flex-1 h-[18px] border-r-2 border-b-2 border-[#1d1d1d] leading-4">环形</button><button aria-label="环形移位" class="border-r border-b border-[#1b1b1b]"><svg width="10" height="14"><use href="#spin"/></svg></button></div>
                <div class="flex gap-1"><button class="flex-1 h-[18px] border-r-2 border-b-2 border-[#1d1d1d] leading-4">循环</button><button aria-label="循环移位" class="border-r border-b border-[#1b1b1b]"><svg width="10" height="14"><use href="#spin"/></svg></button></div>
              </div>
              <fieldset class="-mx-[5px] mt-1 border border-[#181818] px-0.5 h-[39px]">
                <legend class="ml-1 px-0.5 leading-[14px]">预览选择</legend>
                <div class="flex items-center justify-between leading-5">
                  <label class="flex items-center gap-1.5"><input type="radio" name="preview" checked class="appearance-none w-2.5 h-2.5 rounded-full border-2 border-[#222] bg-[#444] checked:bg-white">禁用</label>
                  <label class="flex items-center gap-1.5"><input type="radio" name="preview" class="appearance-none w-2.5 h-2.5 rounded-full border-2 border-[#222] border-b-[#777] border-r-[#777] bg-[#444]">子对象</label>
                  <label class="flex items-center gap-1.5"><input type="radio" name="preview" class="appearance-none w-2.5 h-2.5 rounded-full border-2 border-[#222] border-b-[#777] border-r-[#777] bg-[#444]">多个</label>
                </div>
              </fieldset>
              <p class="pt-1.5 pb-[22px] text-right">选择了 4 个边</p>
            </div>
          </section>
          <section class="mt-2"><h2 class="relative mx-0.5 h-4 bg-[#404040] border border-[#666] flex items-center"><button class="w-full flex text-[#eee]"><span class="w-3 font-bold">+</span><span class="flex-1 pr-3">软选择</span></button></h2></section>
          <section class="mt-1">
            <h2 class="relative mx-0.5 h-4 bg-[#404040] border border-[#666] flex items-center"><button class="w-full flex text-[#eee]"><span class="w-3 font-bold">-</span><span class="flex-1 pr-3">编辑边</span></button></h2>
            <div class="-mt-2 border border-b-0 border-[#181818] pt-[15px] px-1.5">
              <div class="grid grid-cols-2 gap-x-1 gap-y-1">
                <button class="col-span-2 h-[19px] border-r-2 border-b-2 border-[#1d1d1d] leading-[17px]">插入顶点</button>
                <button class="h-[19px] border-r-2 border-b-2 border-[#1d1d1d] leading-[17px]">移除</button><button class="h-[19px] border-r-2 border-b-2 border-[#1d1d1d] leading-[17px]">分割</button>
                <div class="flex"><button class="flex-1 h-[19px] border-r-2 border-b-2 border-[#1d1d1d] leading-[17px]">挤出</button><button aria-label="挤出设置" class="w-[17px] border-r-2 border-b-2 border-[#1d1d1d] flex items-center justify-center"><i class="w-2.5 h-2.5 border border-t-[3px] border-black"></i></button></div>
                <div class="flex"><button class="flex-1 h-[19px] border-r-2 border-b-2 border-[#1d1d1d] leading-[17px]">焊接</button><button aria-label="焊接设置" class="w-[17px] border-r-2 border-b-2 border-[#1d1d1d] flex items-center justify-center"><i class="w-2.5 h-2.5 border border-t-[3px] border-black"></i></button></div>
                <button aria-label="切角" class="h-[19px] border-r-2 border-b-2 border-[#1d1d1d]"></button>
                <button class="h-[19px] border-r-2 border-b-2 border-[#1d1d1d] leading-[17px]">目标焊接</button>
                <button aria-label="桥" class="h-[19px] border-r-2 border-b-2 border-[#1d1d1d]"></button>
                <div class="flex"><button class="flex-1 h-[19px] border-r-2 border-b-2 border-[#1d1d1d] leading-[17px]">连接</button><button aria-label="连接设置" class="w-[17px] border-r-2 border-b-2 border-[#1d1d1d] flex items-center justify-center"><i class="w-2.5 h-2.5 border border-t-[3px] border-black"></i></button></div>
                <button class="col-span-2 h-[19px] border-r-2 border-b-2 border-[#1d1d1d] leading-[17px] text-right pr-3.5">创建图形</button>
              </div>
              <div class="mt-0.5 h-4 border-t border-r border-[#181818] flex items-end justify-end pr-5 gap-1"><i class="w-12 h-2 border-t-2 border-r border-black bg-[#555]"></i><i class="w-[11px] h-2.5 border-r border-black flex items-center justify-center"><svg width="7" height="4"><path d="M0 4h7L3.500 0z" fill="#ddd"/></svg></i></div>
            </div>
          </section>
        </div>
        <div class="w-1 flex flex-col bg-[#bdbdbd]"><i class="h-[137px] bg-[#101010]"></i></div>
      </div>
    </aside>
  </div>

  <!-- Status bar -->
  <footer class="h-12 flex shrink-0 border-t border-[#333] whitespace-nowrap overflow-hidden">
    <div class="w-[100px] shrink-0 pl-0.5 pt-0.5 flex flex-col gap-[3px] border-r border-[#222]">
      <input aria-label="宏录制器" class="h-[21px] w-[97px] bg-[#dcc1c4] border border-[#eee]">
      <input aria-label="侦听器" value="欢迎使用 MAXScript" class="h-5 w-[97px] bg-white border border-[#eee] text-black px-[3px] text-[12px] leading-4 font-['Liberation_Mono','Noto_Sans_CJK_SC',monospace]">
    </div>
    <div class="flex-1 min-w-0 ml-1.5 border-l-2 border-[#222]">
      <div class="h-6 flex items-center pt-1 pr-[3px]">
        <div class="flex-1 h-[22px] border border-[#222] border-b-[#555] pl-1 leading-5">选择了 1 个 对象</div>
        <button aria-label="孤立" class="w-[26px] flex justify-center"><svg width="12" height="18" viewBox="0 0 12 18"><circle cx="6" cy="6" r="4.500" fill="#e68a92" stroke="#ffd0d4"/><path d="M6 11v5" stroke="#fff" stroke-width="1.500"/></svg></button>
        <button aria-label="选择锁定" class="w-[26px] flex justify-center"><svg width="12" height="16" viewBox="0 0 12 16"><path d="M3 7V4c0-3 6-3 6 0v3" fill="none" stroke="#eee" stroke-width="1.500"/><path d="M1 7h10v7H1z" fill="#efe4c8"/><path d="M6 9v3" stroke="#333"/></svg></button>
        <button aria-label="绝对模式" class="w-[28px] flex justify-center"><svg width="14" height="14" viewBox="0 0 14 14"><path d="M0 0h14v14H0z" fill="#e5e5e5"/><circle cx="7" cy="7" r="3.500" fill="none" stroke="#333" stroke-width="1.500"/><path d="M7 0v3M7 11v3M0 7h3M11 7h3" stroke="#333" stroke-width="1.500"/></svg></button>
        <label class="flex items-center text-[11px] pl-0.5 w-[82px]"><span class="flex-1">X:</span><input value="357.673" class="w-[57px] h-5 bg-[#555] border border-t-2 border-l-2 border-[#141414] border-r-[#444] border-b-[#444] px-0.5 mr-px"><svg class="border-r border-b border-[#1b1b1b] mr-px w-3 h-4"><use href="#spin"/></svg></label>
        <label class="flex items-center text-[11px] w-[82px]"><span class="flex-1">Y:</span><input value="388.754" class="w-[57px] h-5 bg-[#555] border border-t-2 border-l-2 border-[#141414] border-r-[#444] border-b-[#444] px-0.5 mr-px"><svg class="border-r border-b border-[#1b1b1b] mr-px w-3 h-4"><use href="#spin"/></svg></label>
        <label class="flex items-center text-[11px] w-[82px]"><span class="flex-1">Z:</span><input value="-1200.0" class="w-[57px] h-5 bg-[#555] border border-t-2 border-l-2 border-[#141414] border-r-[#444] border-b-[#444] px-0.5 mr-px"><svg class="border-r border-b border-[#1b1b1b] mr-px w-3 h-4"><use href="#spin"/></svg></label>
      </div>
      <div class="h-6 flex pt-1"><div class="flex-1 border-t border-[#222] pl-[5px] leading-[22px]">单击或单击并拖动以选择对象</div><button aria-label="自适应降级" class="w-[22px] h-5 bg-[#3f7fdc] border border-[#111] flex items-center justify-center mr-0.5"><svg width="14" height="14" viewBox="0 0 14 14"><path d="M1 3l2-2h10v10l-2 2H1z" fill="#fff" stroke="#123"/><path d="M4 4h7v7H4z" fill="#ddd" stroke="#123"/></svg></button></div>
    </div>
    <div class="w-[100px] shrink-0 pt-1"><div class="h-[21px] border border-[#222] pl-[5px] leading-5">栅格 <span class="text-[11px]">= 10.0</span></div><div class="mt-[3px] h-6 border-t border-l border-[#222] pl-[5px] leading-[22px]">添加时间标记</div></div>
    <button aria-label="设置关键点" class="w-[38px] shrink-0 ml-1 border-x border-[#222] flex items-center justify-center"><svg width="26" height="12" viewBox="0 0 26 12"><circle cx="5" cy="6" r="3.500" fill="none" stroke="#000" stroke-width="2.200"/><path d="M9 6h16M20 6v4M24 6v5" stroke="#000" stroke-width="2.200"/></svg></button>
    <div class="w-[67px] shrink-0 ml-1.5 pt-1 grid grid-rows-2"><button class="border-r-2 border-b-2 border-[#1d1d1d]">自动关键点</button><button class="border-r-2 border-b-2 border-[#1d1d1d]">设置关键点</button></div>
    <div class="w-[114px] shrink-0 ml-[3px] pt-0.5 flex flex-col">
      <select aria-label="选定对象" class="appearance-none h-5 mt-0.5 bg-[#e8e8e8] text-black border border-[#222] text-[12px] leading-4 px-0.5"><option>选定对象</option></select>
      <div class="flex flex-1 items-center pt-0.5"><button aria-label="默认切线" class="w-6"><svg width="20" height="18" viewBox="0 0 20 18"><path d="M2 14c4 0 5-11 7-11s3 9 5 9l2-4" fill="none" stroke="#e04a55" stroke-width="1.500"/><path d="M2 9l4 5M9 3l4 5" stroke="#6d86d0"/><path d="M19 14v3h-4z" fill="#fff"/></svg></button><button class="flex-1 h-5 border-r-2 border-b-2 border-[#1d1d1d]">关键点过滤器...</button></div>
    </div>
    <div class="w-[115px] shrink-0 flex items-end pl-2.5 pb-0.5">
      <button aria-label="关键点模式" class="w-[26px] h-5"><svg width="18" height="16" viewBox="0 0 18 16"><path d="M1.500 3v9M16.500 3v9M8 4v7L3 7.500zM10 4v7l5-3.500z" fill="none" stroke="#ddd" stroke-width="1.200"/></svg></button>
      <input aria-label="当前帧" value="0" class="w-[62px] h-5 bg-[#555] border border-t-2 border-l-2 border-[#161616] px-0.5 text-[11px]"><button aria-label="调整帧" class="ml-0.5 border-r border-b border-[#1b1b1b]"><svg width="10" height="16"><use href="#spin"/></svg></button>
    </div>
    <div class="w-[115px] shrink-0 grid grid-cols-5 grid-rows-2 items-center justify-items-center pt-0.5">
      <i></i><i></i>
      <button aria-label="缩放所有视图"><svg width="16" height="16" viewBox="0 0 16 16"><path d="M1 1h6v6H1zM8 1h6v6H8zM1 8h6v6H1z" fill="#ddd"/><circle cx="10" cy="10" r="3.500" fill="#555" stroke="#fff"/><path d="M12 12l3 3" stroke="#fff" stroke-width="2"/></svg></button>
      <button aria-label="最大化显示"><svg width="17" height="16" viewBox="0 0 17 16"><path d="M1 5V1h3M12 1h3v4M1 11v4h3" fill="none" stroke="#ddd"/><path d="M4 7l2-2h6v6l-2 2H4z" fill="#74b668" stroke="#254a20"/><path d="M17 12v4h-4z" fill="#fff"/></svg></button>
      <button aria-label="所有视图最大化显示"><svg width="18" height="16" viewBox="0 0 18 16"><path d="M6 1h5v5H6zM12 1h5v5h-5zM11 8h5v4h-5z" fill="#ddd"/><path d="M1 8l2-2h7v7l-2 2H1z" fill="#74b668" stroke="#254a20"/><path d="M18 12v4h-4z" fill="#fff"/></svg></button>
      <button aria-label="时间配置"><svg width="16" height="16" viewBox="0 0 16 16"><path d="M1 1h10v12H1z" fill="#dfe6f0"/><path d="M2.500 3h4v5h-4zM8 3h2M8 6h2M3 11h5" fill="#1c4d95" stroke="#1c4d95"/><circle cx="11" cy="11" r="4" fill="#fff" stroke="#555"/><path d="M11 9v2h2" fill="none" stroke="#222"/></svg></button>
      <button aria-label="缩放区域"><svg width="16" height="16" viewBox="0 0 16 16"><path d="M1.500 1.500h10v10h-10z" fill="none" stroke="#eee" stroke-dasharray="2 1"/><path d="M11 10h4v4h-4z" fill="#eee"/></svg></button>
      <button aria-label="平移视图"><svg width="16" height="16" viewBox="0 0 16 16"><path d="M6 15L1 9l1-1 3 2-1-7 1-1 2 6V1h1.500l.5 7 2-6 1 1-1 6 2.500-3 1 1-3 8z" fill="#fff" stroke="#444" stroke-width=".5"/></svg></button>
      <button aria-label="环绕"><svg width="17" height="16" viewBox="0 0 17 16"><path d="M8 1v7l6 4M8 8l-6 5" stroke="#e8e8e8" fill="none"/><path d="M8 4l4 5-2 3H5L4 9z" fill="#74b668" stroke="#ddd"/><path d="M1 12c4 4 10 4 13 0" fill="none" stroke="#ddd"/><path d="M17 12v4h-4z" fill="#fff"/></svg></button>
      <button aria-label="最大化视口"><svg width="16" height="16" viewBox="0 0 16 16"><path d="M5 5h9v9H5z" fill="#999" stroke="#ddd"/><path d="M1 1h10v10H1z" fill="#f2f2f2"/><path d="M9 9L3 3M3 7V3h4" fill="none" stroke="#222" stroke-width="1.500"/></svg></button>
    </div>
  </footer>

  <!-- Watermark badge over the lower right corner -->
  <div class="absolute right-[71px] bottom-[25px] w-[235px] h-[115px] bg-[#213057] flex items-center pl-3.5 gap-4 text-[#cfd3dc]">
    <svg width="48" height="52" viewBox="0 0 48 52"><path d="M18 39c-3 2-6 0-6-4V8c0-4 3-5.500 6-3.500L40 19c5 4 5 8 0 12L18 46C10 51 2.500 47 2.500 40V8" fill="none" stroke="currentColor" stroke-width="3.200"/><path d="M18 20l9 5-9 5z" fill="currentColor"/><path d="M30.500 20v10" stroke="currentColor" stroke-width="1.200"/></svg>
    <div class="whitespace-nowrap"><div class="text-[36px] leading-8 pb-1 font-bold font-['Noto_Sans_CJK_SC',sans-serif]">溜溜自学</div><div class="text-[17px] leading-5 font-['DejaVu_Sans',sans-serif]">zixue.3D66.COM</div></div>
  </div>
</div>
<script>
  // Frames 0-100: a labelled tick every five frames, four short ticks between
  const ruler = document.getElementById('ruler');
  let ticks = '';
  for (let f = 0; f < 100; f += 5) {
    ticks += '<div class="flex-1 h-full flex">' +
      '<div class="flex-1 flex flex-col items-start"><i class="w-px h-3 bg-[#777]"></i><span class="w-px flex justify-center leading-3">' + f + '</span></div>' +
      '<i class="flex-1 h-3 border-l border-[#666]"></i><i class="flex-1 h-3 border-l border-[#666]"></i><i class="flex-1 h-3 border-l border-[#666]"></i><i class="flex-1 h-3 border-l border-[#666]"></i></div>';
  }
  ruler.innerHTML = ticks;
</script>
</body>
</html>
